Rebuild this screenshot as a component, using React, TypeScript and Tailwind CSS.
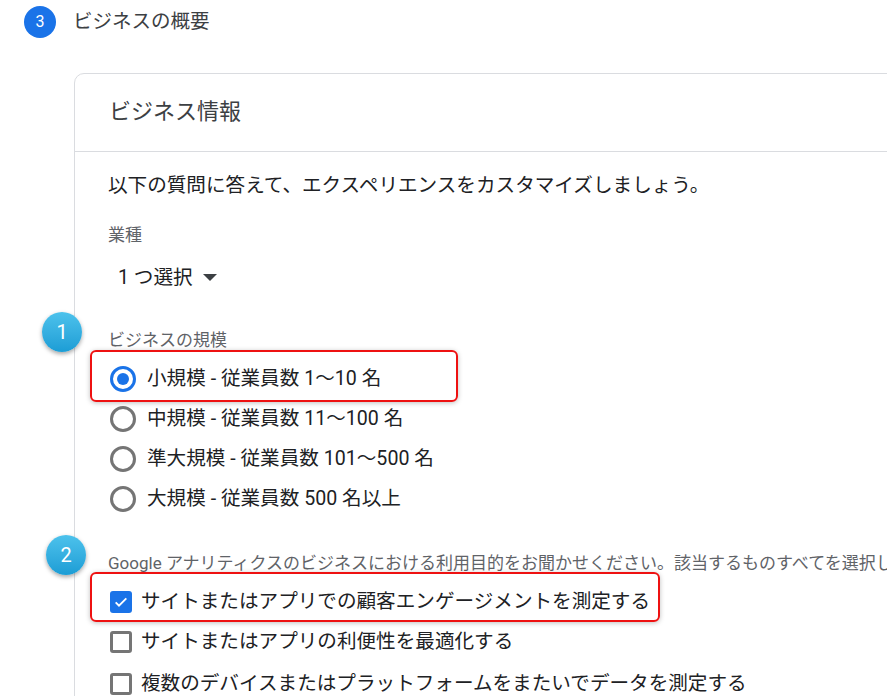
import React from 'react';

const font = { fontFamily: "Roboto, 'Noto Sans CJK JP', sans-serif" };

const sizes = [
  '小規模 - 従業員数 1〜10 名',
  '中規模 - 従業員数 11〜100 名',
  '準大規模 - 従業員数 101〜500 名',
  '大規模 - 従業員数 500 名以上',
];

const purposes = [
  'サイトまたはアプリでの顧客エンゲージメントを測定する',
  'サイトまたはアプリの利便性を最適化する',
  '複数のデバイスまたはプラットフォームをまたいでデータを測定する',
];

const Badge: React.FC<{ n: number; className: string }> = ({ n, className }) => (
  <div
    className={`absolute w-10 h-10 rounded-full bg-gradient-to-b from-[#4cc2ec] to-[#1b9dd5] shadow-[0_2px_4px_rgba(0,0,0,0.35)] flex items-center justify-center text-white text-[20px] ${className}`}
  >
    {n}
  </div>
);

const Radio: React.FC<{ checked: boolean }> = ({ checked }) => (
  <div
    className={`w-[26px] h-[26px] rounded-full border-[3px] flex items-center justify-center shrink-0 ${
      checked ? 'border-[#1a73e8]' : 'border-[#757575]'
    }`}
  >
    {checked && <div className="w-[12px] h-[12px] rounded-full bg-[#1a73e8]" />}
  </div>
);

const Checkbox: React.FC<{ checked: boolean }> = ({ checked }) =>
  checked ? (
    <div className="w-[22px] h-[22px] rounded-[3px] bg-[#1a73e8] flex items-center justify-center shrink-0">
      <svg width="16" height="16" viewBox="0 0 24 24" fill="none">
        <path d="M4 12.5l5 5L20 6.5" stroke="white" strokeWidth="2.8" />
      </svg>
    </div>
  ) : (
    <div className="w-[22px] h-[22px] rounded-[3px] border-[3px] border-[#757575] shrink-0" />
  );

export default function App() {
  return (
    <div className="relative w-[887px] h-[696px] overflow-hidden bg-white text-[#3c4043]" style={font}>
      {/* step header */}
      <div className="flex items-center pl-[24px] pt-[6px] h-[38px]">
        <div className="w-8 h-8 rounded-full bg-[#1a73e8] text-white text-[16px] flex items-center justify-center">
          3
        </div>
        <div className="ml-[17px] text-[19.5px] leading-6 text-[#3c4043]">ビジネスの概要</div>
      </div>

      {/* card */}
      <div className="ml-[74px] mt-[35px] w-[900px] border border-[#dadce0] rounded-tl-[10px]">
        <div className="h-[78px] flex items-center pl-[34px] border-b border-[#dadce0]">
          <span className="text-[22px] leading-7 text-[#3c4043] mt-[-2px]">ビジネス情報</span>
        </div>

        <div className="pl-[33px] pt-[22px]">
          <div className="text-[19.6px] leading-6 whitespace-nowrap text-[#202124]">
            以下の質問に答えて、エクスペリエンスをカスタマイズしましょう。
          </div>

          <div className="mt-[25px] text-[17px] leading-6 text-[#5f6368]">業種</div>

          <div className="mt-[19px] ml-[10px] flex items-center h-6 text-[19.6px] text-[#202124]">
            <span>1 つ選択</span>
            <svg className="ml-[10px]" width="14" height="8" viewBox="0 0 14 8">
              <path d="M0 0h14L7 7z" fill="#3c4043" />
            </svg>
          </div>

          <div className="mt-[38px] text-[17px] leading-6 text-[#5f6368]">ビジネスの規模</div>

          <div className="mt-[7px] ml-[2px] flex flex-col">
            {sizes.map((s, i) => (
              <div key={s} className="relative h-10 flex items-center">
                {i === 0 && (
                  <div className="absolute left-[-20px] top-[-9px] w-[368px] h-[52px] border-2 border-[#ee1111] rounded-[6px] shadow-[0_1px_5px_rgba(0,0,0,0.25)]" />
                )}
                <Radio checked={i === 0} />
                <span className="ml-[11px] text-[19.6px] leading-6 whitespace-nowrap text-[#202124]">{s}</span>
              </div>
            ))}
          </div>

          <div className="mt-[32px] text-[17px] leading-6 text-[#5f6368] whitespace-nowrap">
            Google アナリティクスのビジネスにおける利用目的をお聞かせください。該当するものすべてを選択してください。
          </div>

          <div className="mt-[7px] ml-[2px] flex flex-col">
            {purposes.map((p, i) => (
              <div key={p} className={`relative h-10 flex items-center ${i === 2 ? 'mt-[2px]' : ''}`}>
                {i === 0 && (
                  <div className="absolute left-[-20px] top-[-10px] w-[570px] h-[50px] border-2 border-[#ee1111] rounded-[6px] shadow-[0_1px_5px_rgba(0,0,0,0.25)]" />
                )}
                <Checkbox checked={i === 0} />
                <span className="ml-[9px] text-[19.6px] leading-6 whitespace-nowrap text-[#202124]">{p}</span>
              </div>
            ))}
          </div>
        </div>
      </div>

      <Badge n={1} className="left-[42px] top-[312px]" />
      <Badge n={2} className="left-[46px] top-[535px]" />
    </div>
  );
}
